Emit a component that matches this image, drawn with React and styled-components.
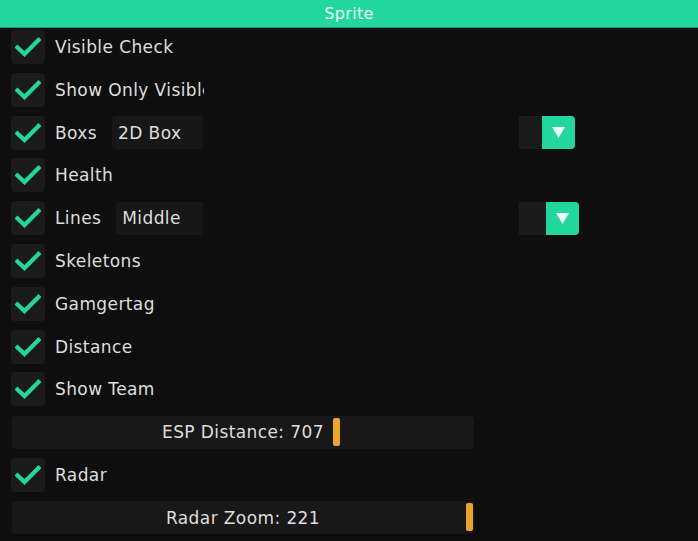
import React from 'react';
import styled, { createGlobalStyle } from 'styled-components';

const colors = {
    accent: '#22d69e',
    bg: '#0e0e0e',
    frame: '#1b1b1b',
    text: '#dedede',
    grab: '#eaa62c'
};

const GlobalStyle = createGlobalStyle`
    html, body {
        margin: 0;
        padding: 0;
        background: ${colors.bg};
    }
    body {
        font-family: 'DejaVu Sans', 'Liberation Sans', sans-serif;
        color: ${colors.text};
    }
`;

const Window = styled.div`
    width: 698px;
    height: 541px;
    background: ${colors.bg};
    overflow: hidden;
`;

const TitleBar = styled.div`
    height: 27px;
    background: ${colors.accent};
    border-bottom: 1px solid #159a72;
    display: flex;
    align-items: center;
    justify-content: center;
    font-size: 16px;
    letter-spacing: 0.3px;
    color: #e9fff7;
`;

const Body = styled.div`
    display: flex;
    flex-flow: column nowrap;
    gap: 7.8px;
    padding: 1.6px 0 0 11px;
`;

const Row = styled.div`
    display: flex;
    align-items: center;
    height: 35px;
    font-size: 17px;
    letter-spacing: 0.4px;
    white-space: nowrap;
`;

const Box = styled.span`
    width: 34px;
    height: 34px;
    border-radius: 4px;
    background: ${colors.frame};
    display: flex;
    align-items: center;
    justify-content: center;
    flex-shrink: 0;
`;

const Label = styled.span`
    margin-left: 10px;
    max-width: ${props => props.clip || 'none'};
    overflow: hidden;
`;

const Combo = styled.div`
    margin-left: 15px;
    width: 463px;
    height: 33px;
    display: flex;
    align-items: stretch;
`;

const Preview = styled.span`
    width: ${props => props.width}px;
    background: #171717;
    border-radius: 4px 0 0 4px;
    display: flex;
    align-items: center;
    padding-left: 6px;
    box-sizing: border-box;
`;

const Spacer = styled.span`
    flex: 1;
`;

const ArrowPad = styled.span`
    width: ${props => props.width}px;
    background: ${colors.frame};
`;

const ArrowButton = styled.span`
    width: 33px;
    background: ${colors.accent};
    border-radius: 0 4px 4px 0;
    display: flex;
    align-items: center;
    justify-content: center;
`;

const Slider = styled.div`
    position: relative;
    width: 462px;
    height: 33px;
    border-radius: 4px;
    background: #181818;
    display: flex;
    align-items: center;
    justify-content: center;
    margin-left: 1px;
`;

const Grab = styled.span`
    position: absolute;
    top: 2px;
    bottom: 3px;
    width: 7px;
    border-radius: 2px;
    background: ${colors.grab};
`;

const Check = () => (
    <svg width="26" height="20" viewBox="0 0 26 20">
        <path d="M2.5 10.5 L9.5 17 L23.5 3" fill="none" stroke={colors.accent} strokeWidth="4.2" strokeLinecap="square" />
    </svg>
);

const Arrow = () => (
    <svg width="13" height="11" viewBox="0 0 13 11">
        <path d="M0 0 H13 L6.5 11 Z" fill="#e9fff7" />
    </svg>
);

const CheckRow = ({ label, clip, children }) => (
    <Row>
        <Box><Check /></Box>
        <Label clip={clip}>{label}</Label>
        {children}
    </Row>
);

const ComboBox = ({ preview, previewWidth, padWidth }) => (
    <Combo>
        <Preview width={previewWidth}>{preview}</Preview>
        <Spacer />
        <ArrowPad width={padWidth} />
        <ArrowButton><Arrow /></ArrowButton>
    </Combo>
);

const SliderRow = ({ label, value, grabAt }) => (
    <Row>
        <Slider>
            {label}: {value}
            <Grab style={{ left: grabAt }} />
        </Slider>
    </Row>
);

export default function App() {
    return (
        <Window>
            <GlobalStyle />
            <TitleBar>Sprite</TitleBar>
            <Body>
                <CheckRow label="Visible Check" />
                <CheckRow label="Show Only Visible" clip="149px" />
                <CheckRow label="Boxs">
                    <ComboBox preview="2D Box" previewWidth={91} padWidth={23} />
                </CheckRow>
                <CheckRow label="Health" />
                <CheckRow label="Lines">
                    <ComboBox preview="Middle" previewWidth={87} padWidth={27} />
                </CheckRow>
                <CheckRow label="Skeletons" />
                <CheckRow label="Gamgertag" />
                <CheckRow label="Distance" />
                <CheckRow label="Show Team" />
                <SliderRow label="ESP Distance" value={707} grabAt={321} />
                <CheckRow label="Radar" />
                <SliderRow label="Radar Zoom" value={221} grabAt={454} />
            </Body>
        </Window>
    );
}
